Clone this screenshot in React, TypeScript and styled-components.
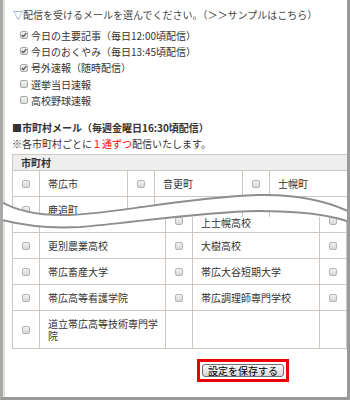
import React from "react";
import styled, { createGlobalStyle } from "styled-components";

const GlobalStyle = createGlobalStyle`
  html, body {
    margin: 0;
    padding: 0;
    background: #fff;
    overflow: hidden;
  }
  body {
    font-family: "Noto Sans CJK JP", "Noto Sans", sans-serif;
    font-size: 10px;
    color: #333;
  }
`;

const Frame = styled.div`
  position: relative;
  box-sizing: border-box;
  width: 350px;
  height: 400px;
  padding: 7px 0 0 9px;
  border-left: 3px solid #a9a9a9;
  border-right: 3px solid #9a9a9a;
  border-bottom: 3px solid #9a9a9a;
  box-shadow: inset 2px 0 0 #e6e2d8;
  overflow: hidden;
  background: #fff;
`;

const Title = styled.div`
  margin-left: 1px;
  line-height: 16px;
  white-space: nowrap;
  color: #444;

  .mark {
    color: #4a86c5;
  }
`;

const OptionList = styled.div`
  display: flex;
  flex-direction: column;
  margin: 4px 0 0 8px;
`;

const Option = styled.label`
  display: flex;
  align-items: center;
  gap: 3px;
  height: 16.3px;
  white-space: nowrap;
`;

const Box = styled.span<{ $checked?: boolean }>`
  display: inline-flex;
  align-items: center;
  justify-content: center;
  box-sizing: border-box;
  width: 8px;
  height: 8px;
  border: 1px solid #a8a8a8;
  border-radius: 2px;
  background: linear-gradient(#f2f2f2, #dcdcdc);

  svg {
    display: ${(p) => (p.$checked ? "block" : "none")};
  }
`;

const SectionHead = styled.div`
  margin-top: 12px;
  line-height: 16px;
  font-weight: bold;
  white-space: nowrap;
`;

const Note = styled.div`
  line-height: 16px;
  white-space: nowrap;

  em {
    font-style: normal;
    color: #f00;
  }
`;

// upper half of the torn screenshot (shows up to the 鹿追町 row)
const UpperClip = styled.div`
  margin-top: 2px;
  height: 63px;
  overflow: hidden;
`;

const Grid = styled.div<{ $cols: string; $top?: boolean }>`
  display: grid;
  grid-template-columns: ${(p) => p.$cols};
  border-left: 1px solid #cfc8c0;
  border-top: ${(p) => (p.$top ? "1px solid #cfc8c0" : "none")};
`;

const HeadCell = styled.div`
  grid-column: 1 / -1;
  height: 15px;
  line-height: 15px;
  padding-left: 8px;
  background: #eeeeee;
  font-weight: bold;
  border-bottom: 1px solid #cfc8c0;
`;

const Cell = styled.div<{ $check?: boolean; $h: number }>`
  display: flex;
  align-items: ${(p) => (p.$h < 20 ? "flex-start" : "center")};
  justify-content: ${(p) => (p.$check ? "center" : "flex-start")};
  box-sizing: border-box;
  height: ${(p) => p.$h}px;
  padding: ${(p) => (p.$check ? "0" : "0 0 0 8px")};
  line-height: 12px;
  border-right: 1px solid #cfc8c0;
  border-bottom: 1px solid #cfc8c0;
`;

const CellBox = styled.span`
  display: inline-block;
  box-sizing: border-box;
  width: 8px;
  height: 8px;
  border: 1px solid #b4b4b4;
  border-radius: 2px;
  background: linear-gradient(#f0f0f0, #d8d8d8);
`;

const Tear = styled.svg`
  position: absolute;
  left: -3px;
  top: 185px;
  pointer-events: none;
`;

const SaveRow = styled.div`
  display: flex;
  margin: 10px 0 0 185px;
`;

const Highlight = styled.div`
  display: flex;
  padding: 2px;
  border: 3px solid #ee0000;
`;

const SaveButton = styled.button`
  box-sizing: border-box;
  width: 82px;
  height: 13px;
  padding: 0;
  font-family: "Noto Sans CJK JP", sans-serif;
  font-size: 10px;
  line-height: 11px;
  color: #000;
  border: 1px solid #707070;
  border-radius: 3px;
  background: linear-gradient(#fafafa, #d6d6d6);
`;

const options = [
  { text: "今日の主要記事（毎日12:00頃配信）", checked: true },
  { text: "今日のおくやみ（毎日13:45頃配信）", checked: true },
  { text: "号外速報（随時配信）", checked: true },
  { text: "選挙当日速報", checked: false },
  { text: "高校野球速報", checked: false },
];

// null = cell hidden under the tear
const upperRows: (string | null)[][] = [
  ["帯広市", "音更町", "士幌町"],
  ["鹿追町", "新得町", null],
];

const lowerRows: (string | null)[][] = [
  [null, "上士幌高校", ""],
  ["更別農業高校", "大樹高校", ""],
  ["帯広畜産大学", "帯広大谷短期大学", ""],
  ["帯広高等看護学院", "帯広調理師専門学校", ""],
  ["道立帯広高等技術専門学院", null, null],
];

const rowHeights = [16, 26, 26, 26, 38];

const TOP_EDGE =
  "M -2 200 C 15 210, 35 216, 70 215 C 120 213, 180 198, 258 195 C 300 194, 330 202, 352 213";
const BOTTOM_EDGE =
  "M -2 219 C 20 225, 45 229, 80 227 C 130 223, 200 212, 258 211 C 300 211, 330 214, 352 223";
const BAND =
  TOP_EDGE +
  " L 352 223 C 330 214, 300 211, 258 211 C 200 212, 130 223, 80 227 C 45 229, 20 225, -2 219 Z";

function Check() {
  return (
    <svg width="6" height="6" viewBox="0 0 6 6">
      <path d="M0.8 3 L2.4 4.6 L5.2 1.2" fill="none" stroke="#555" strokeWidth="1.3" />
    </svg>
  );
}

export default function App() {
  return (
    <>
      <GlobalStyle />
      <Frame>
        <Title>
          <span className="mark">▽</span>配信を受けるメールを選んでください。（＞＞サンプルはこちら）
        </Title>
        <OptionList>
          {options.map((o) => (
            <Option key={o.text}>
              <Box $checked={o.checked}>
                <Check />
              </Box>
              {o.text}
            </Option>
          ))}
        </OptionList>

        <SectionHead>■市町村メール（毎週金曜日16:30頃配信）</SectionHead>
        <Note>
          ※各市町村ごとに<em>１通ずつ</em>配信いたします。
        </Note>

        <UpperClip>
          <Grid $cols="27px 88px 27px 88px 27px 88px" $top>
            <HeadCell>市町村</HeadCell>
            {upperRows.map((row, i) =>
              row.map((name, j) => (
                <React.Fragment key={`${i}-${j}`}>
                  <Cell $check $h={26}>
                    {name !== null && <CellBox />}
                  </Cell>
                  <Cell $h={26}>{name}</Cell>
                </React.Fragment>
              ))
            )}
          </Grid>
        </UpperClip>

        <Grid $cols="27px 126px 27px 127px 27px">
          {lowerRows.map((row, i) => {
            const h = rowHeights[i];
            return (
              <React.Fragment key={i}>
                {row.map((name, j) =>
                  j < 2 ? (
                    <React.Fragment key={j}>
                      <Cell $check $h={h}>
                        {name !== null && <CellBox />}
                      </Cell>
                      <Cell $h={h}>{name}</Cell>
                    </React.Fragment>
                  ) : (
                    <Cell key={j} $check $h={h}>
                      {name !== null && <CellBox />}
                    </Cell>
                  )
                )}
              </React.Fragment>
            );
          })}
        </Grid>

        <SaveRow>
          <Highlight>
            <SaveButton>設定を保存する</SaveButton>
          </Highlight>
        </SaveRow>

        <Tear width="350" height="45" viewBox="0 185 350 45">
          <path d={BAND} fill="#fff" />
          <path d={TOP_EDGE} fill="none" stroke="#8e8e8e" strokeWidth="2" />
          <path d={BOTTOM_EDGE} fill="none" stroke="#8e8e8e" strokeWidth="2" />
        </Tear>
      </Frame>
    </>
  );
}
